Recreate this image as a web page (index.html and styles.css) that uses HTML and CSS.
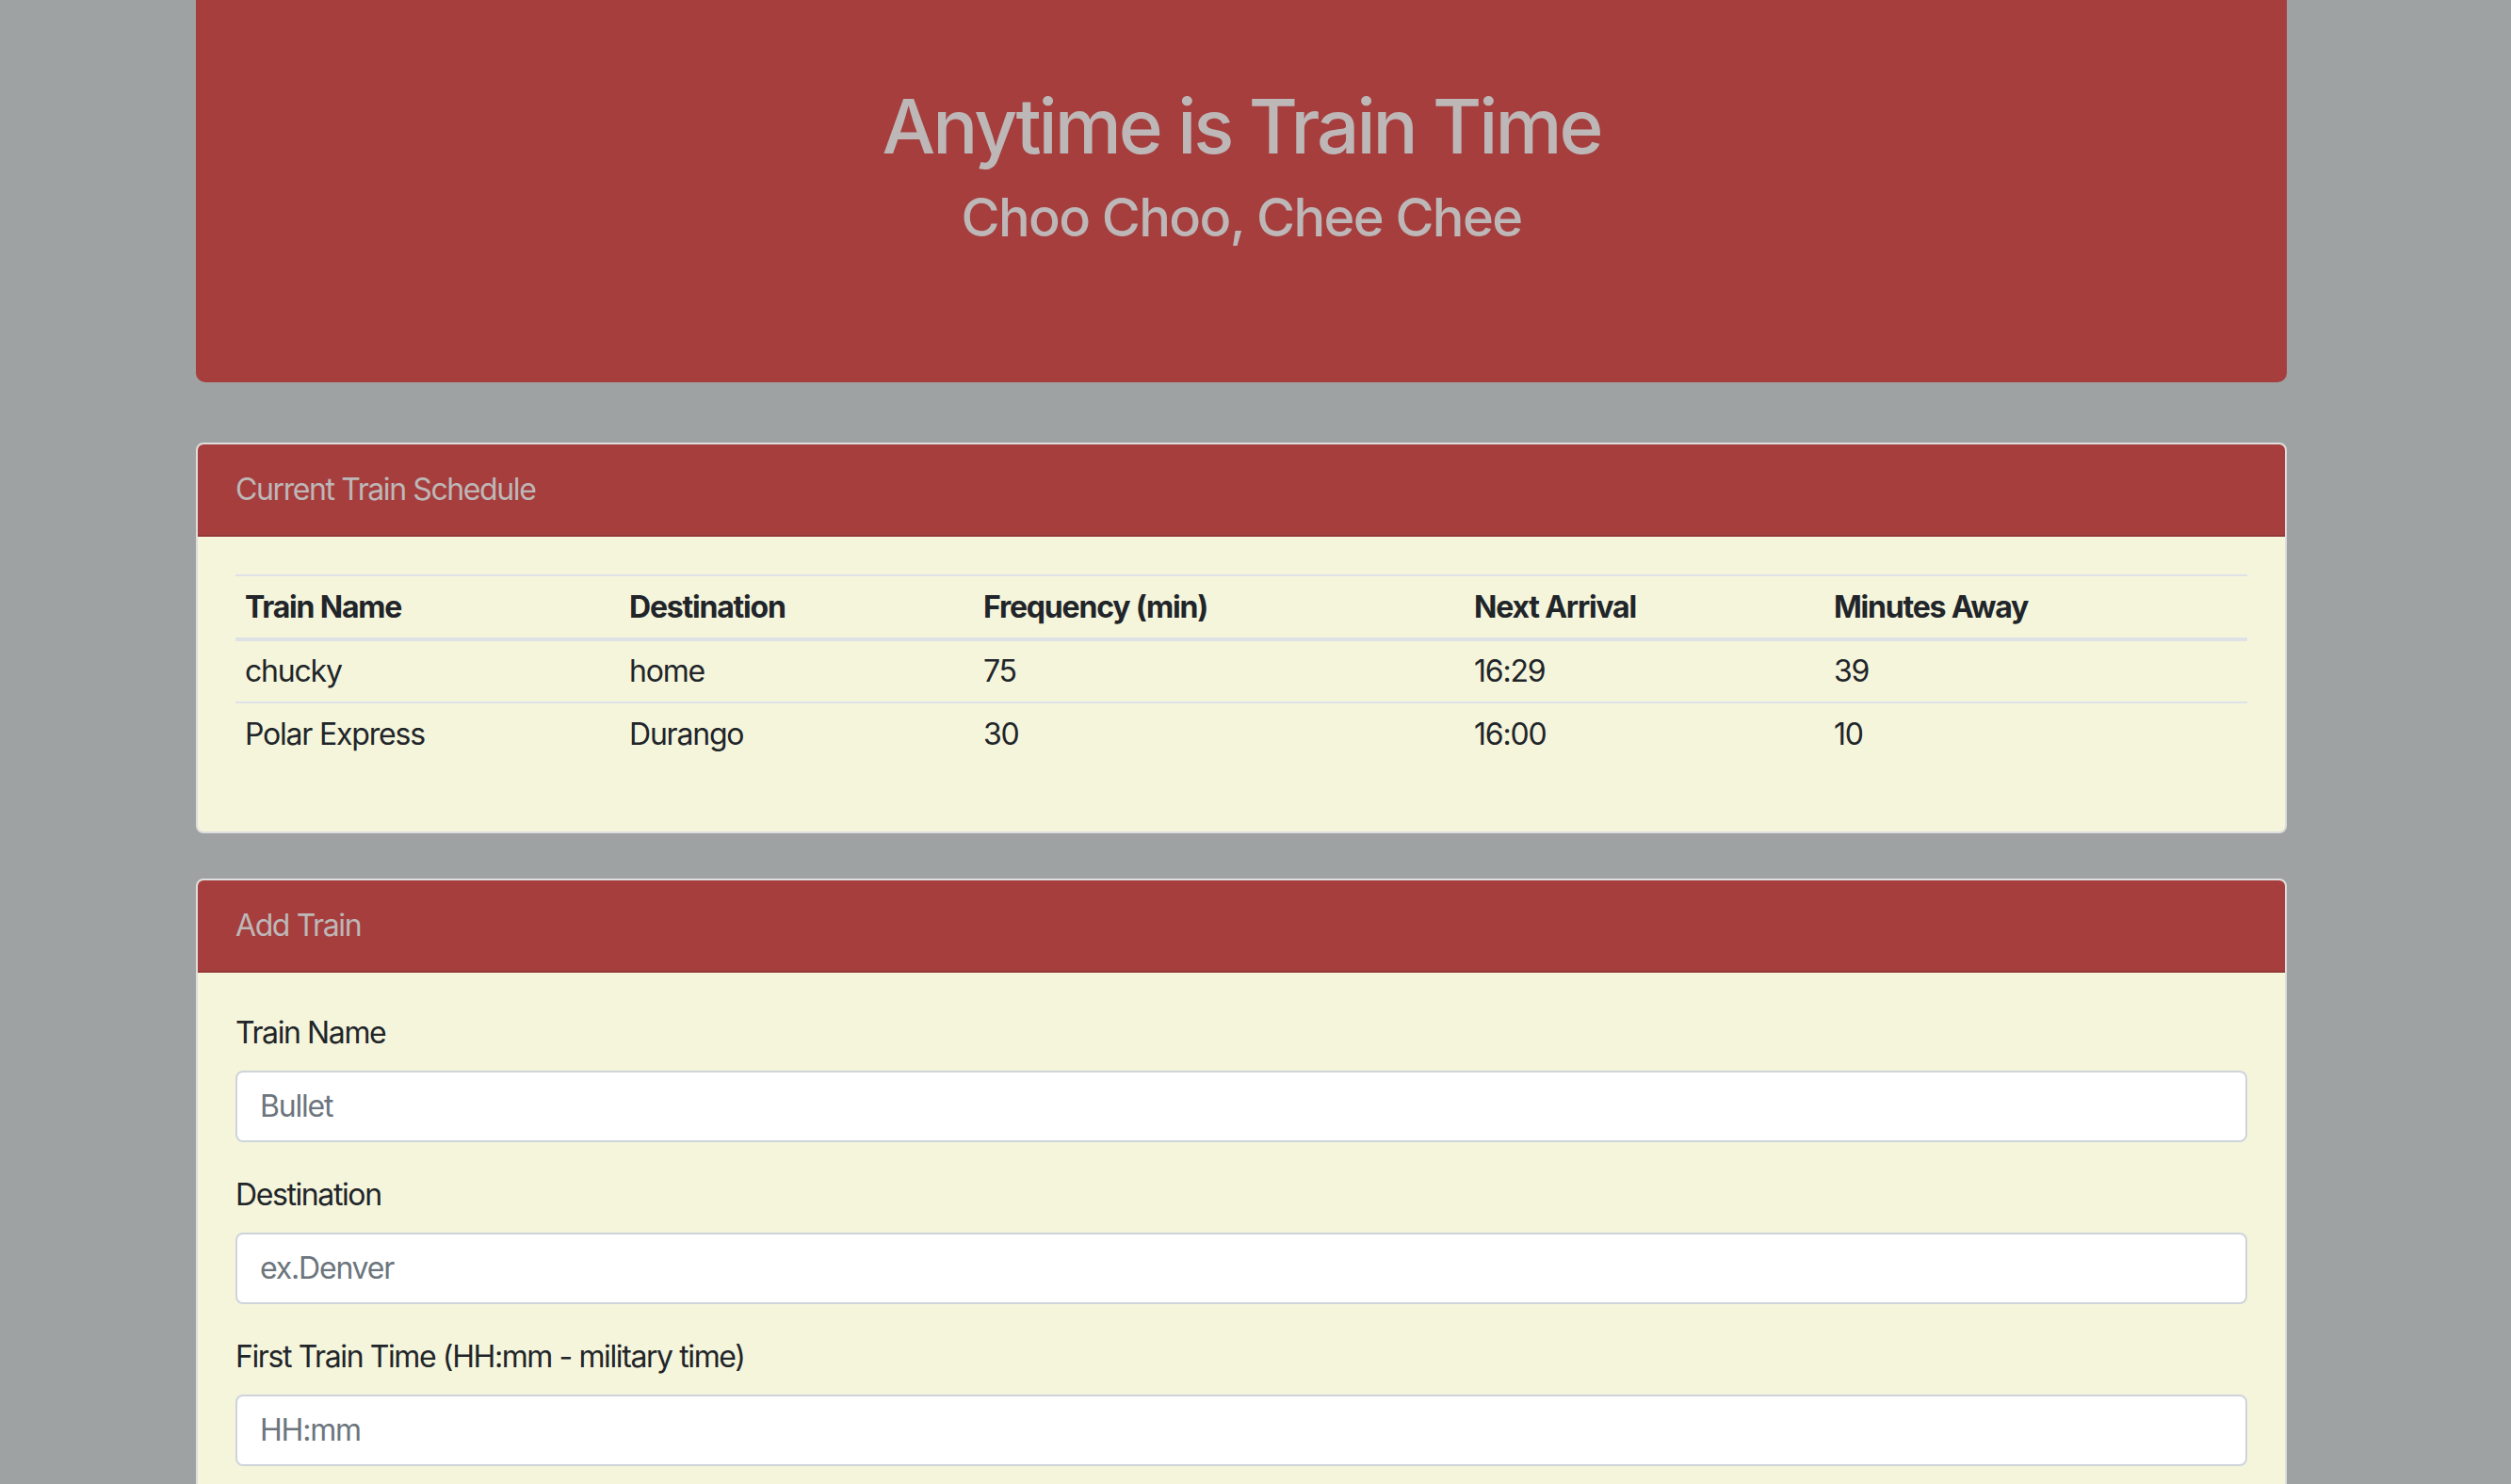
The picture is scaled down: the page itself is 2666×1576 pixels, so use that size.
FILE: index.html
```html
<!DOCTYPE html>
<html lang="en">
<head>
<meta charset="utf-8">
<title>Train Scheduler</title>
<link rel="stylesheet" href="styles.css">
</head>
<body>
<div class="container">
  <header class="jumbotron">
    <h1 class="title">Anytime is Train Time</h1>
    <h3 class="subtitle">Choo Choo, Chee Chee</h3>
  </header>

  <section class="card">
    <div class="card-header">Current Train Schedule</div>
    <div class="card-body">
      <table class="schedule">
        <thead>
          <tr>
            <th class="col-name">Train Name</th>
            <th class="col-dest">Destination</th>
            <th class="col-freq">Frequency (min)</th>
            <th class="col-next">Next Arrival</th>
            <th class="col-away">Minutes Away</th>
          </tr>
        </thead>
        <tbody>
          <tr>
            <td>chucky</td>
            <td>home</td>
            <td>75</td>
            <td>16:29</td>
            <td>39</td>
          </tr>
          <tr>
            <td>Polar Express</td>
            <td>Durango</td>
            <td>30</td>
            <td>16:00</td>
            <td>10</td>
          </tr>
        </tbody>
      </table>
    </div>
  </section>

  <section class="card">
    <div class="card-header">Add Train</div>
    <div class="card-body">
      <form class="train-form">
        <div class="form-group">
          <label class="form-label" for="train-name">Train Name</label>
          <input class="form-control" id="train-name" type="text" placeholder="Bullet">
        </div>
        <div class="form-group">
          <label class="form-label" for="destination">Destination</label>
          <input class="form-control" id="destination" type="text" placeholder="ex.Denver">
        </div>
        <div class="form-group">
          <label class="form-label" for="first-time">First Train Time (HH:mm - military time)</label>
          <input class="form-control" id="first-time" type="text" placeholder="HH:mm">
        </div>
        <div class="form-group">
          <label class="form-label" for="frequency">Frequency (min)</label>
          <input class="form-control" id="frequency" type="text" placeholder="ex.25">
        </div>
        <button class="btn-submit" type="submit">Submit</button>
      </form>
    </div>
  </section>
</div>
</body>
</html>
```

FILE: styles.css
```css
html, body {
  margin: 0;
  padding: 0;
}

body {
  background: #9ea2a3;
  font-family: Inter, "Liberation Sans", sans-serif;
  color: #212529;
  padding-right: 30px;
}

.container {
  width: 2220px;
  margin: 0 auto;
}

.jumbotron {
  background: #a63e3e;
  color: #bdb7b7;
  text-align: center;
  padding: 86px 64px 125px;
  border-radius: 0 0 10px 10px;
  margin-bottom: 64px;
}

.title {
  margin: 0 0 16px;
  font-size: 80px;
  line-height: 96px;
  font-weight: 500;
  letter-spacing: -3px;
}

.subtitle {
  margin: 0 0 16px;
  font-size: 56px;
  line-height: 67px;
  font-weight: 500;
  letter-spacing: -1.6px;
}

.card {
  background: #f5f5dc;
  border: 2px solid #dedede;
  border-radius: 8px;
  overflow: hidden;
  margin-bottom: 48px;
}

.card-header {
  background: #a63e3e;
  color: #bdb7b7;
  font-size: 32px;
  line-height: 48px;
  letter-spacing: -1.4px;
  padding: 24px 40px;
  border-bottom: 2px solid #943737;
}

.card-body {
  padding: 40px;
}

.schedule {
  width: 100%;
  border-collapse: collapse;
  table-layout: fixed;
  margin-bottom: 31px;
  font-size: 32px;
  line-height: 48px;
  letter-spacing: -1.2px;
  color: #212529;
}

.schedule th,
.schedule td {
  box-sizing: border-box;
  text-align: left;
  vertical-align: top;
  padding: 8.5px 10px 8px;
  border-top: 2px solid #dee2e6;
}

.schedule th {
  font-weight: 700;
  border-bottom: 4px solid #dee2e6;
}

.col-name { width: 408px; }
.col-dest { width: 376px; }
.col-freq { width: 521px; }
.col-next { width: 382px; }
.col-away { width: 449px; }

.form-group {
  margin-bottom: 32px;
}

.form-label {
  display: block;
  font-size: 32px;
  line-height: 48px;
  letter-spacing: -1.4px;
  margin-bottom: 16px;
  color: #212529;
}

.form-control {
  display: block;
  box-sizing: border-box;
  width: 100%;
  height: 76px;
  padding: 12px 24px;
  font-family: inherit;
  font-size: 32px;
  line-height: 48px;
  letter-spacing: -1.2px;
  color: #495057;
  background: #ffffff;
  border: 2px solid #ced4da;
  border-radius: 8px;
}

.form-control::placeholder {
  color: #6c757d;
  opacity: 1;
}

.btn-submit {
  font-family: inherit;
  font-size: 32px;
  line-height: 48px;
  padding: 12px 24px;
  color: #ffffff;
  background: #a63e3e;
  border: 2px solid #a63e3e;
  border-radius: 8px;
}
```
